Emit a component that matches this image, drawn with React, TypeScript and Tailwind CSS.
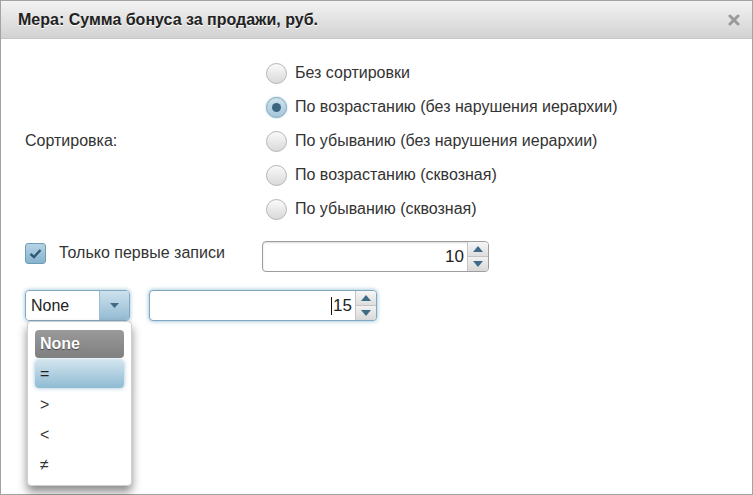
import React from "react";

const font = { fontFamily: '"Liberation Sans", Arial, sans-serif' };

function Radio({ checked, label }: { checked?: boolean; label: string }) {
  return (
    <div className="flex h-[34px] items-center">
      {checked ? (
        <span className="flex h-[21px] w-[21px] items-center justify-center rounded-full border border-[#7ea6be] bg-gradient-to-b from-[#cfe2ee] to-[#a4c6da] shadow-[0_0_2px_rgba(90,140,170,0.6)]">
          <span className="h-[9px] w-[9px] rounded-full bg-[#3b6680]" />
        </span>
      ) : (
        <span className="h-[21px] w-[21px] rounded-full border border-[#b4b4b4] bg-gradient-to-b from-[#fafafa] to-[#d9d9d9]" />
      )}
      <span className="ml-[8px] text-[16px] text-[#333]">{label}</span>
    </div>
  );
}

function SpinButtons() {
  return (
    <div className="flex w-[21px] flex-col border-l border-[#c4c4c4]">
      <div className="flex flex-1 items-center justify-center bg-gradient-to-b from-[#f6f6f6] to-[#dedede] border-b border-[#c4c4c4]">
        <svg width="10" height="6" viewBox="0 0 10 6">
          <path d="M0 6 L5 0 L10 6 Z" fill="#3f6b86" />
        </svg>
      </div>
      <div className="flex flex-1 items-center justify-center bg-gradient-to-b from-[#f2f2f2] to-[#d8d8d8]">
        <svg width="10" height="6" viewBox="0 0 10 6">
          <path d="M0 0 L10 0 L5 6 Z" fill="#3f6b86" />
        </svg>
      </div>
    </div>
  );
}

export default function App() {
  return (
    <div className="h-[495px] w-[753px] bg-white" style={font}>
      <div className="flex h-full w-full flex-col border border-[#a3a3a3]">
        {/* header */}
        <div className="flex h-[38px] items-center justify-between border-b border-[#c6c6c6] bg-gradient-to-b from-[#f3f3f3] to-[#d2d2d2] pl-[17px] pr-[12px]">
          <span className="text-[16px] font-bold text-[#222] [text-shadow:0_1px_0_#fff]">
            Мера: Сумма бонуса за продажи, руб.
          </span>
          <svg width="12" height="12" viewBox="0 0 12 12">
            <path d="M2 2 L10 10 M10 2 L2 10" stroke="#9a9a9a" strokeWidth="3" strokeLinecap="round" />
          </svg>
        </div>

        {/* body */}
        <div className="relative flex-1 pl-[24px] pt-[17px]">
          <div className="flex">
            <div className="flex w-[241px] items-center text-[16px] text-[#333]">Сортировка:</div>
            <div className="flex flex-col">
              <Radio label="Без сортировки" />
              <Radio checked label="По возрастанию (без нарушения иерархии)" />
              <Radio label="По убыванию (без нарушения иерархии)" />
              <Radio label="По возрастанию (сквозная)" />
              <Radio label="По убыванию (сквозная)" />
            </div>
          </div>

          {/* only first records */}
          <div className="mt-[15px] flex h-[31px]">
            <div className="flex w-[237px] items-start pt-[2px]">
              <span className="flex h-[21px] w-[21px] items-center justify-center rounded-[3px] border border-[#6f9cb6] bg-gradient-to-b from-[#b7d4e5] to-[#86b3cd]">
                <svg width="13" height="11" viewBox="0 0 13 11">
                  <path d="M1.5 6 L5 9 L11.5 2" stroke="#2e5b76" strokeWidth="2.4" fill="none" />
                </svg>
              </span>
              <span className="ml-[13px] -mt-[2px] text-[16px] text-[#333]">Только первые записи</span>
            </div>
            <div className="flex h-[31px] w-[227px] overflow-hidden rounded-[4px] border border-[#9d9d9d] bg-white shadow-[inset_0_1px_2px_rgba(0,0,0,0.15)]">
              <div className="flex flex-1 items-center justify-end pr-[3px] text-[17px] text-[#222]">10</div>
              <SpinButtons />
            </div>
          </div>

          {/* filter row */}
          <div className="mt-[18px] flex h-[31px]">
            <div className="relative flex h-[31px] w-[105px] overflow-visible rounded-[4px] border border-[#7fa9c1] shadow-[0_0_4px_rgba(110,160,195,0.7)]">
              <div className="flex flex-1 items-center rounded-l-[4px] bg-white pl-[5px] text-[16px] text-[#222]">None</div>
              <div className="flex w-[30px] items-center justify-center rounded-r-[3px] border-l border-[#9dbfd3] bg-gradient-to-b from-[#cde2ee] to-[#93bbd2]">
                <svg width="9" height="5" viewBox="0 0 9 5">
                  <path d="M0 0 L9 0 L4.5 5 Z" fill="#3f6b86" />
                </svg>
              </div>
            </div>
            <div className="ml-[19px] flex h-[31px] w-[228px] overflow-hidden rounded-[4px] border border-[#7fa9c1] bg-white shadow-[0_0_4px_rgba(110,160,195,0.8)]">
              <div className="flex flex-1 items-center justify-end pr-[3px] text-[17px] text-[#222]">
                <span className="mr-[1px] h-[18px] w-px bg-[#111]" />
                15
              </div>
              <SpinButtons />
            </div>
          </div>

          {/* dropdown list */}
          <div className="absolute left-[26px] top-[282px] flex h-[165px] w-[105px] flex-col gap-[2px] rounded-[4px] border border-[#cfcfcf] bg-white px-[7px] pt-[8px] shadow-[0_6px_10px_rgba(0,0,0,0.45)]">
            <div className="flex h-[28px] items-center rounded-[4px] bg-gradient-to-b from-[#9a9a9a] to-[#7f7f7f] pl-[5px] text-[16px] font-bold text-white [text-shadow:0_1px_1px_#444]">
              None
            </div>
            <div className="flex h-[28px] items-center rounded-[4px] bg-gradient-to-b from-[#d2e4ee] to-[#8fbbd3] pl-[5px] text-[16px] text-[#222] shadow-[0_0_4px_rgba(120,170,200,0.7)]">
              =
            </div>
            <div className="flex h-[29px] items-center pl-[5px] text-[16px] text-[#333]">&gt;</div>
            <div className="flex h-[27px] items-center pl-[5px] text-[16px] text-[#333]">&lt;</div>
            <div className="flex h-[29px] items-center pl-[5px] text-[16px] text-[#333]">≠</div>
          </div>
        </div>
      </div>
    </div>
  );
}
